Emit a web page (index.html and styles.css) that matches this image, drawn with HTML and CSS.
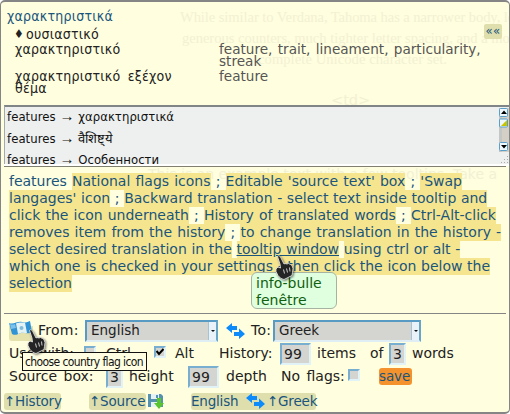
FILE: index.html
```html
<!DOCTYPE html>
<html lang="en">
<head>
<meta charset="utf-8">
<title>Translation tooltip</title>
<link rel="stylesheet" href="styles.css">
</head>
<body>
<svg class="defs" width="0" height="0">
  <symbol id="swap" viewBox="0 0 19 16"><path fill="#0d8bfa" d="M6 0v3h5v4H6v3L0 5zM13 5.500v3.500H8v4h5v3l6-5z"/></symbol>
  <symbol id="hand" viewBox="0 0 19 26"><path fill="#242424" stroke="#eee" stroke-width=".8" d="M2.500 1.500C3.500 0 5 1 6 3l3 6 1-.500 2 .5 1.500-.5 2 1 1.500 1 1 3-.5 4-.5 3-4 2-4 2-3-1-3-3-2-4V14l2-2 2.500 1L5 9z"/><path stroke="#ccc" d="M8.500 14.500l1 4m2-5l1 4m2-5l.5 4"/></symbol>
</svg>
<main class="panel">
  <div class="ghost g1">While similar to Verdana, Tahoma has a narrower body, less</div>
  <div class="ghost g2">generous counters, much tighter letter spacing, and a more</div>
  <div class="ghost g3">complete Unicode character set.</div>
  <div class="ghost g4">&lt;td&gt;</div>
  <div class="ghost g5">This is an example text with a few tooltips. Take a</div>
  <section class="entry">
    <h1>χαρακτηριστικά</h1>
    <p class="pos"><span>♦</span>ουσιαστικό</p>
    <div class="pair"><span>χαρακτηριστικό</span><span class="en">feature, trait, lineament, particularity,<br>streak</span></div>
    <div class="pair"><span>χαρακτηριστικό εξέχον<br>θέμα</span><span class="en">feature</span></div>
    <a class="back">««</a>
  </section>
  <section class="history">
    <div class="items"><p>features <i>→</i> χαρακτηριστικά</p><p>features <i>→</i> वैशिष्ट्ये</p><p>features <i>→</i> Особенности</p></div>
    <svg class="scroll" width="10" height="56" viewBox="0 0 10 56"><path fill="#c4c8c4" d="M0 0h3v44H0z"/><path fill="#d4d0c8" d="M3 0h7v44H3z"/><g fill="#eef7fb" stroke="#5a9fc8"><rect x=".5" y=".5" width="8" height="8" rx="1"/><rect x=".5" y="11" width="8" height="8" rx="1"/><rect x=".5" y="34.5" width="8" height="8" rx="1"/></g><path d="M2 6h6L5 2.500zM2 37h6L5 40.500z"/><path fill="#c8c400" d="M2 18h6v-6z"/><path stroke="#aaa" stroke-dasharray="1 2" d="M2 54.500h7M5 51.500h4M8 48.500h1"/></svg>
  </section>
  <section class="source">
    <p class="wide">features <mark>National flags icons</mark> ; <mark>Editable 'source text' box</mark> ; <mark>'Swap</mark></p>
    <p><mark>langages' icon</mark> ; <mark>Backward translation - select text inside tooltip and</mark></p>
    <p class="wide"><mark>click the icon underneath</mark> ; <mark>History of translated words</mark> ; <mark>Ctrl-Alt-click</mark></p>
    <p class="wide"><mark>removes item from the history</mark> ; <mark>to change translation in the history -</mark></p>
    <p><mark>select desired translation in the</mark> <mark><u>tooltip window</u></mark> <mark>using ctrl or alt -</mark></p>
    <p><mark>which one is checked in your settings - then click the icon below the</mark></p>
    <p><mark>selection</mark></p>
    <div class="bubble">info-bulle<br>fenêtre</div>
    <svg class="hand over-link"><use href="#hand"/></svg>
  </section>
  <section class="settings">
    <div class="row r1">
      <svg class="flag" width="24" height="20" viewBox="0 0 24 20"><path fill="#e5e2ae" d="M0 5h24v15H0z"/><path fill="#2f93d6" d="M0 2c5 2 8-2 13-1s5 0 8-1l2 11c-5 3-7 0-11 1s-5 3-9 1z"/><path fill="#e4f2f4" d="M7 2.500c3-1.500 5-1 9-1l2 10.500c-3 0-5-1-9 1z"/><path fill="#7cc2ea" d="M1 3q3 1 5 0l1 4-5 1z"/><circle cx="12.500" cy="7" r="2" fill="#80bddd"/></svg>
      <span>From:</span><div class="select">English<i></i></div>
      <svg class="swap"><use href="#swap"/></svg><span>To:</span><div class="select">Greek<i></i></div>
    </div>
    <div class="row r2"><span>Use with:</span><b class="check"></b><span>Ctrl</span><b class="check"><svg width="8" height="8" viewBox="0 0 8 8"><path fill="none" stroke="#000" stroke-width="2" d="M.5 3l2.500 3L7.500 1"/></svg></b><span>Alt</span><span>History:</span><span class="num">99</span><span>items</span><span>of</span><span class="num short">3</span><span>words</span></div>
    <div class="row r3"><span>Source box:</span><span class="num short">3</span><span>height</span><span class="num">99</span><span>depth</span><span>No flags:</span><b class="check"></b><a class="save">save</a></div>
    <div class="hint">choose country flag icon</div>
    <svg class="hand over-flag"><use href="#hand"/></svg>
  </section>
  <footer>
    <a>↑History</a><a>↑Source</a>
    <svg class="disk" width="16" height="16" viewBox="0 0 16 16"><path fill="#5592b0" d="M0 1h13l2 2v11H0z"/><path fill="#e7f2f5" d="M3 1h8v5H3zM3 9h9v5H3z"/><path fill="#5592b0" d="M8 2h2v3H8z"/><path fill="#5ac52c" d="M9 5h4v5h3l-5 6-5-6h3z"/></svg>
    <a class="dir"><span>English</span><svg class="swap"><use href="#swap"/></svg><span>↑Greek</span></a>
  </footer>
</main>
</body>
</html>
```
FILE: styles.css
```css
* { box-sizing: border-box; }
body { margin: 0; background: #fff; overflow: hidden; }
p, h1 { margin: 0; font-weight: normal; }
.defs { position: absolute; }
.panel { position: relative; width: 510px; height: 414px; background: #fffede; border: 2px solid #858585; border-left-width: 1px; border-right-width: 1px; border-radius: 5px; overflow: hidden; font: 14px/17px "DejaVu Sans", sans-serif; color: #222; white-space: nowrap; }
.ghost { position: absolute; font: 14.500px/18px "Liberation Serif", serif; color: #f2f1d4; }
.g1 { left: 179px; top: 6px; letter-spacing: -.05px; }
.g2 { left: 181px; top: 27px; }
.g3 { left: 257px; top: 48px; letter-spacing: .1px; }
.g4 { left: 330px; top: 89px; font-family: "DejaVu Sans", sans-serif; }
.g5 { left: 147px; top: 163px; font: 14px/18px "DejaVu Sans", sans-serif; }
.entry, .history, .hint { font-family: "DejaVu Sans Condensed", "DejaVu Sans", sans-serif; font-stretch: condensed; }
.entry { position: relative; height: 103px; padding: 5px 0 0 6px; letter-spacing: .24px; }
h1 { font-size: 14px; line-height: 18px; color: #19557d; }
.pos { display: grid; grid-template-columns: 12px 1fr; padding-left: 7px; line-height: 18px; }
.pos span { font-size: 12px; }
.pair { display: grid; grid-template-columns: 204px 1fr; padding-left: 8px; line-height: 12px; height: 27px; word-spacing: 3px; }
.en { color: #555; font: 13.600px/12px "DejaVu Sans", sans-serif; letter-spacing: 0; word-spacing: 1px; }
.back { position: absolute; left: 483px; top: 22px; width: 18px; height: 15px; border-radius: 2px; background: #dfdfad; color: #19557d; line-height: 14px; text-align: center; font-size: 13px; }
.history { display: flex; justify-content: space-between; height: 59px; margin-left: 3px; border-top: 2px solid #808688; border-left: 1px solid #a5aaa9; background: #edf0ef; overflow: hidden; box-shadow: 0 2px #fff; color: #111; font-size: 13px; }
.items p { height: 21.500px; line-height: 19px; padding-left: 2px; letter-spacing: .04px; }
.items i { font: 15px/1 "Liberation Sans", sans-serif; }
.scroll { margin-top: 1px; }
.source { position: relative; margin: 2px 3px 0; height: 148px; padding: 6px 0 0 5px; border-top: 1px solid #808070; border-bottom: 1px solid #858585; color: #19557d; word-spacing: .2px; }
.source p { height: 17px; }
.source .wide { word-spacing: .7px; }
mark { display: inline-block; height: 17px; background: #f6e58f; color: inherit; }
.bubble { position: absolute; left: 247px; top: 105px; width: 86px; height: 37px; padding: 2px 0 0 4px; border: 1px solid #a7b3a2; border-radius: 6px; background: #dfffdf; color: #106010; }
.hand { position: absolute; width: 19px; height: 26px; filter: drop-shadow(1px 1px 1px #0008); }
.over-link { left: 271px; top: 88px; }
.settings { position: relative; height: 78px; padding: 5px 0 0 8px; }
.row { display: grid; align-items: center; height: 23px; }
.r1 { grid-template-columns: 29px 47px 141px 25px 22px 148px; }
.r1 > span { letter-spacing: .25px; }
.flag { border-radius: 3px; }
.select { display: flex; justify-content: space-between; align-items: center; width: 133px; height: 22px; padding-left: 4px; background: #d4d4d0; border: 2px solid; border-color: #579bc5 #68a5ca #deeef4 #579bc5; font-size: 13.500px; }
.select:last-child { width: 148px; }
.select i { width: 8px; height: 18px; background: #e9f2f8; border-left: 1px solid #a4c4d5; display: grid; place-items: center; }
.select i::after { content: ""; border: 2px solid transparent; border-top-color: #111; border-bottom: 0; }
.swap { width: 19px; height: 16px; }
.r2 { grid-template-columns: 75px 22px 48px 21px 44px 61px 37px 53px 19px 23px 60px; }
.r3 { grid-template-columns: 97px 23px 59px 38px 55px 67px 31px 33px; word-spacing: 2px; }
.num { width: 31px; height: 22px; padding: 1px 0 0 2px; background: #d4d4d0; border: 2px solid; border-color: #78aed0 #e2f3f7 #e2f3f7 #78aed0; }
.num.short { width: 17px; }
.check { width: 12px; height: 12px; margin-bottom: 4px; background: #d4d4d0; border: 2px solid; border-color: #78aed0 #e2f3f7 #e2f3f7 #78aed0; display: grid; place-items: center; }
.save { height: 17px; border-radius: 3px; background: #f4932d; color: #19557d; line-height: 17px; font-size: 13.500px; letter-spacing: -.1px; }
.hint { position: absolute; left: 21px; top: 38px; width: 125px; height: 19px; background: #fffee2; border: 1px solid #111; padding-left: 2px; line-height: 18px; font-size: 12px; letter-spacing: -.6px; color: #111; }
.over-flag { left: 26px; top: 15px; }
footer { display: grid; grid-template-columns: 57px 28px 57px 2px 16px 27px 125px; height: 18px; align-items: center; padding-left: 3px; color: #19557d; font-size: 13.500px; letter-spacing: -.2px; }
footer a:nth-of-type(1) { grid-column: 1; }
footer a:nth-of-type(2) { grid-column: 3; }
footer .disk { grid-column: 5; }
footer .dir { grid-column: 7; display: grid; grid-template-columns: 55px 21px 1fr; align-items: center; }
footer a { height: 17px; line-height: 17px; border-radius: 3px; background: #dfdfad; }
```
